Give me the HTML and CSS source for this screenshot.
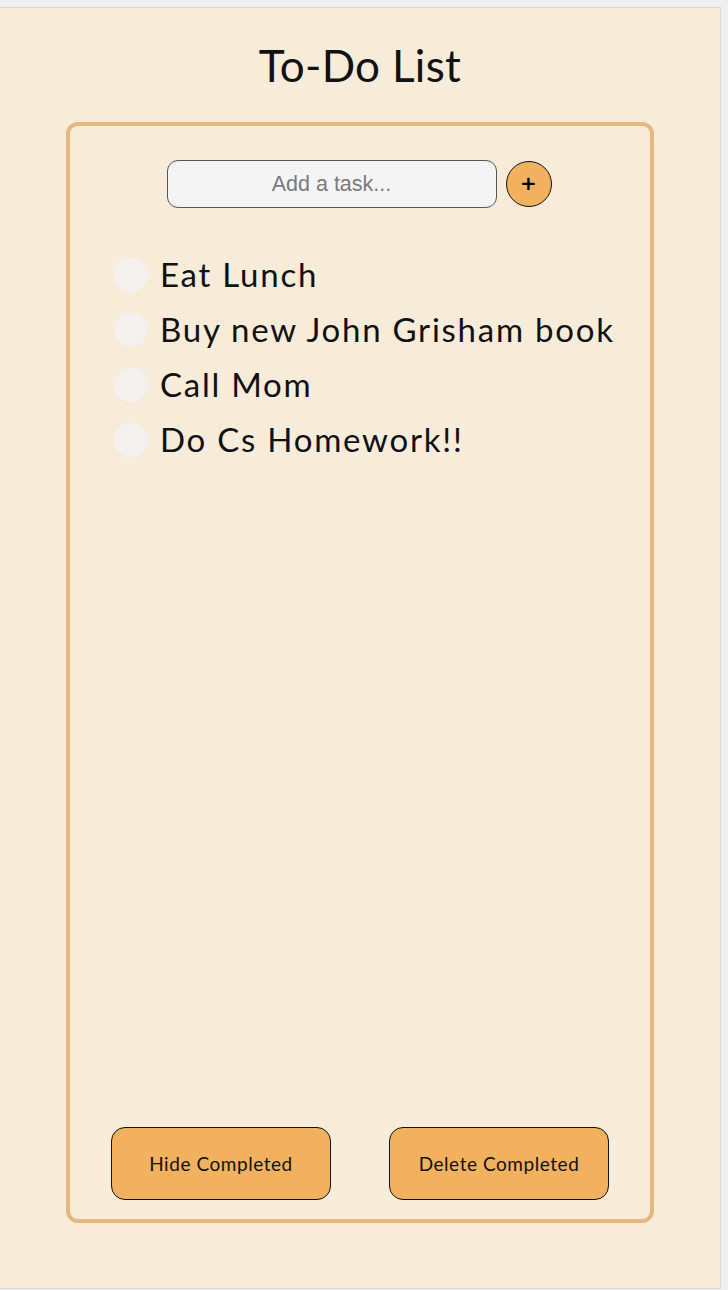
FILE: index.html
```html
<!DOCTYPE html>
<html lang="en">
<head>
<meta charset="utf-8">
<title>To-Do List</title>
<link rel="stylesheet" href="styles.css">
</head>
<body>
<div class="frame">
  <h1 class="title">To-Do List</h1>
  <div class="card">
    <div class="add-row">
      <input class="task-input" type="text" placeholder="Add a task...">
      <button class="add-btn" type="button">+</button>
    </div>
    <ul class="tasks">
      <li class="task"><span class="check"></span><span class="task-text">Eat Lunch</span></li>
      <li class="task"><span class="check"></span><span class="task-text">Buy new John Grisham book</span></li>
      <li class="task"><span class="check"></span><span class="task-text">Call Mom</span></li>
      <li class="task"><span class="check"></span><span class="task-text">Do Cs Homework!!</span></li>
    </ul>
    <div class="actions">
      <button class="action-btn" type="button">Hide Completed</button>
      <button class="action-btn" type="button">Delete Completed</button>
    </div>
  </div>
</div>
</body>
</html>
```

FILE: styles.css
```css
* { box-sizing: border-box; }

html, body {
  margin: 0;
  padding: 0;
  background: #efefef;
}

.frame {
  margin-top: 7px;
  width: 721px;
  height: 1282px;
  background: #f7ebda;
  border-top: 1px solid #d6d6d6;
  border-right: 1px solid #d6d6d6;
  border-bottom: 1px solid #d6d6d6;
  font-family: Lato, "Noto Sans", sans-serif;
  color: #111;
}

.title {
  margin: 0;
  padding-top: 30px;
  height: 114px;
  text-align: center;
  font-weight: 400;
  font-size: 44px;
  line-height: 54px;
  letter-spacing: 0.3px;
}

.card {
  margin-left: 66px;
  width: 588px;
  height: 1101px;
  border: 4px solid #e5b97e;
  border-radius: 12px;
  display: flex;
  flex-direction: column;
  padding: 34px 0 19px;
}

.add-row {
  display: flex;
  justify-content: center;
  align-items: center;
  gap: 9px;
  padding-right: 2px;
}

.task-input {
  width: 330px;
  height: 48px;
  border: 1px solid #555;
  border-radius: 11px;
  background: #f4f4f4;
  text-align: center;
  font-family: "Liberation Sans", Arial, sans-serif;
  font-size: 21.5px;
  padding: 0 8px;
  outline: none;
}

.task-input::placeholder {
  color: #7a7a7a;
}

.add-btn {
  width: 46px;
  height: 46px;
  border-radius: 50%;
  border: 1px solid #111;
  background: #f2b15e;
  font-family: "DejaVu Sans", sans-serif;
  font-weight: 700;
  font-size: 20px;
  line-height: 1;
  padding: 0 0 2px;
  color: #000;
}

.tasks {
  list-style: none;
  margin: 39px 0 0;
  padding: 0 0 0 44px;
}

.task {
  display: flex;
  align-items: center;
  gap: 12px;
  height: 55px;
}

.check {
  width: 34px;
  height: 34px;
  border-radius: 50%;
  background: #f3f2f0;
  flex: none;
}

.task-text {
  font-family: Lato, "Noto Sans", sans-serif;
  font-size: 33px;
  letter-spacing: 1.75px;
  line-height: 40px;
  padding-bottom: 2px;
}

.actions {
  margin-top: auto;
  display: flex;
  justify-content: center;
  gap: 58px;
}

.action-btn {
  width: 220px;
  height: 73px;
  border: 1px solid #111;
  border-radius: 14px;
  background: #f2b15e;
  font-family: Lato, "Noto Sans", sans-serif;
  font-size: 19px;
  letter-spacing: 0.55px;
  color: #111;
}
```
